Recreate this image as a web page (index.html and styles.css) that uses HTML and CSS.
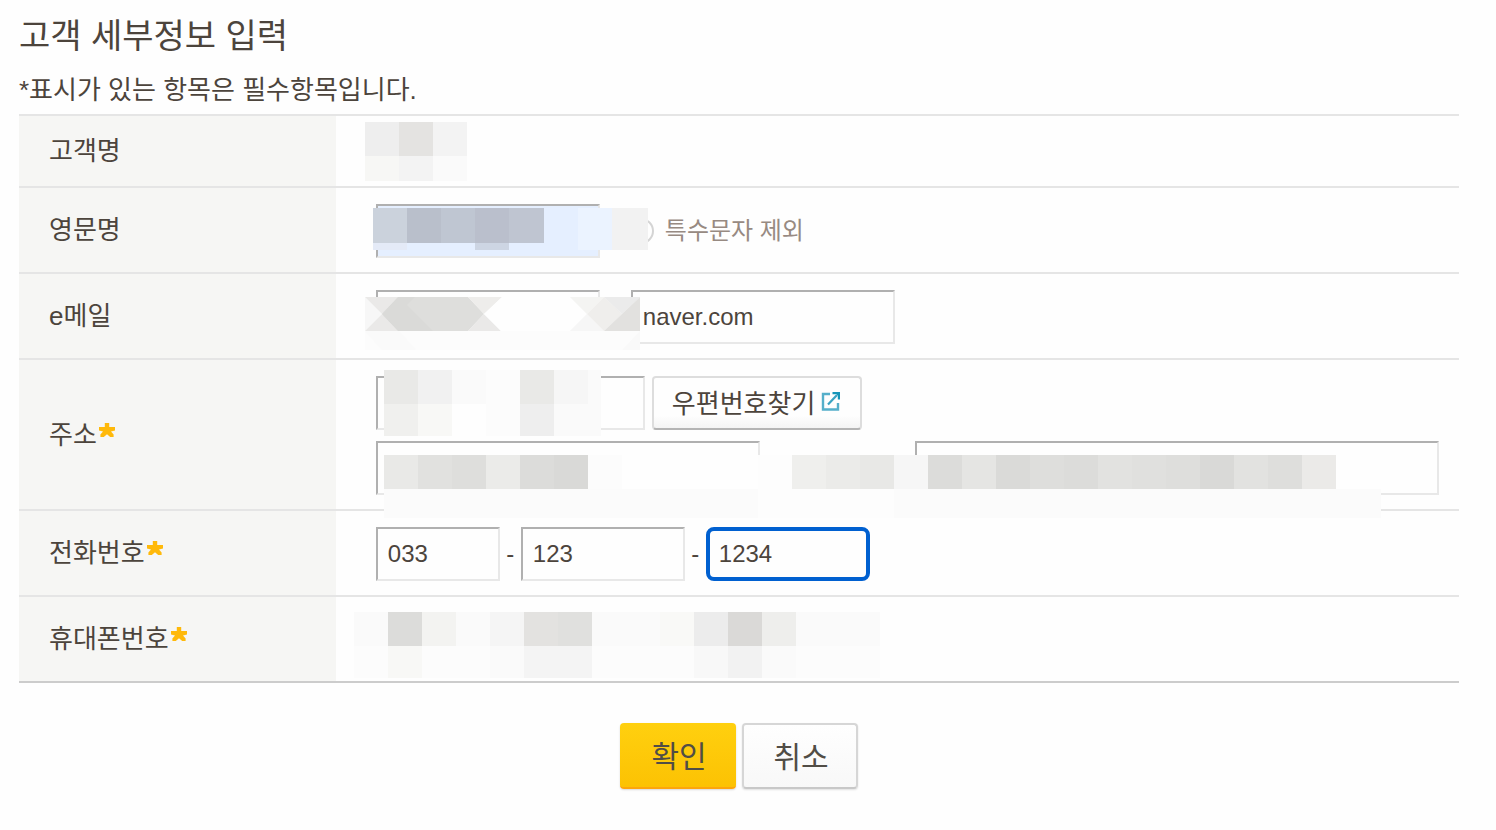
FILE: index.html
```html
<!DOCTYPE html>
<html lang="ko">
<head>
<meta charset="utf-8">
<meta name="viewport" content="width=device-width, initial-scale=1">
<title>고객 세부정보 입력</title>
<link rel="stylesheet" href="styles.css">
</head>
<body>
<svg width="0" height="0" class="defs" aria-hidden="true">
  <symbol id="star" viewBox="0 0 16 14">
    <path d="M5.8 0h4.4v4H16v3.4l-4 1 2.6 3.2V14h-3.4L8 11.2 4.8 14H1.4v-2.4L4 8.4l-4-1V4h5.8z" fill="#ffb90a"/>
  </symbol>
</svg>
<form class="customer">
  <h1 class="title">고객 세부정보 입력</h1>
  <p class="note">*표시가 있는 항목은 필수항목입니다.</p>
  <table class="details">
    <tbody>
      <tr>
        <th scope="row">고객명</th>
        <td>
          <div class="line short"></div>
          <svg class="mask mask-name" width="102" height="59" aria-hidden="true">
            <path d="M0 0h34v34H0z" fill="#eeeeee"/><path d="M34 0h34v34H34z" fill="#e4e3e1"/><path d="M68 0h34v34H68z" fill="#f3f3f3"/>
            <path d="M0 34h34v25H0z" fill="#f7f7f5"/><path d="M34 34h34v25H34z" fill="#f3f3f3"/><path d="M68 34h34v25H68z" fill="#fafafa"/>
          </svg>
        </td>
      </tr>
      <tr>
        <th scope="row"><label for="en">영문명</label></th>
        <td>
          <div class="line">
            <input id="en" class="field w-id filled" type="text">
            <span class="help"></span>
            <span class="hint">특수문자 제외</span>
          </div>
          <svg class="mask mask-en" width="275" height="42" aria-hidden="true">
            <path d="M0 0h275v42H0z" fill="#e5efff"/>
            <path d="M0 0h34v35H0z" fill="#cbd2dc"/><path d="M34 0h34v35H34z" fill="#b9bfcb"/><path d="M68 0h34v35H68z" fill="#bfc6d2"/><path d="M102 0h34v35h-34z" fill="#babfcc"/><path d="M136 0h35v35h-35z" fill="#bfc5d1"/>
            <path d="M0 35h34v7H0z" fill="#e4eaf7"/><path d="M102 35h34v7h-34z" fill="#cdd5e3"/>
            <path d="M205 0h34v42h-34z" fill="#ebf3ff"/><path d="M239 0h36v42h-36z" fill="#f2f2f2"/>
          </svg>
        </td>
      </tr>
      <tr>
        <th scope="row"><label for="mail">e메일</label></th>
        <td>
          <div class="line mail">
            <input id="mail" class="field w-id" type="text">
            <input class="field w-domain" type="text" value="naver.com" aria-label="e메일 도메인">
          </div>
          <svg class="mask mask-mail" width="275" height="53" aria-hidden="true">
            <path d="M0 0h275v53H0z" fill="#fcfcfc"/>
            <path d="M0 0l17 17L0 34z" fill="#f7f7f7"/>
            <path d="M0 0h33L17 17z" fill="#eae9e8"/><path d="M0 34l17-17 16 17z" fill="#eae9e8"/>
            <path d="M33 0h70l16 17-16 17H33L17 17z" fill="#dededc"/>
            <path d="M33 0l-16 17 16 17h35L42 8l8-8z" fill="#dadad8"/>
            <path d="M103 0h34l-18 17z" fill="#eeedeb"/><path d="M103 34l16-17 17 17z" fill="#eae9e8"/>
            <path d="M137 0h68l17 17-17 17h-69l-17-17z" fill="#fefefe"/>
            <path d="M205 0h34l-17 17z" fill="#f4f4f2"/><path d="M205 34l17-17 17 17z" fill="#f6f6f6"/>
            <path d="M239 0l18 17-18 17-17-17z" fill="#efeeec"/>
            <path d="M239 0h36l-18 17z" fill="#ebebeb"/><path d="M275 0v34h-36l18-17z" fill="#e2e1df"/>
            <path d="M0 34h34l17 19H17z" fill="#fafafa"/><path d="M275 34v19h-18z" fill="#f9f9f9"/>
          </svg>
        </td>
      </tr>
      <tr>
        <th scope="row"><label for="zip">주소</label><svg class="star" role="img" aria-label="필수"><use href="#star"/></svg></th>
        <td>
          <div class="address">
            <div class="line zip">
              <input id="zip" class="field w-zip" type="text">
              <button class="find" type="button">우편번호찾기
                <svg class="popup" viewBox="0 0 20 20" aria-hidden="true">
                  <path d="M9 3H2v15.5h15V12" fill="none" stroke="#55afca" stroke-width="2.4"/>
                  <path d="M7 13.5L16 4" fill="none" stroke="#3aa3c2" stroke-width="2.2"/>
                  <path d="M11.5 1H19v7.5h-2.2V4.6L15.5 3.2h-4z" fill="#1595b8"/>
                </svg>
              </button>
            </div>
            <div class="line street">
              <input class="field w-base" type="text" aria-label="기본주소">
              <input class="field w-detail" type="text" aria-label="상세주소">
            </div>
          </div>
          <svg class="mask mask-zip" width="217" height="66" aria-hidden="true">
            <path d="M0 0h217v66H0z" fill="#fafafa"/>
            <path d="M0 0h34v34H0z" fill="#e9e9e7"/><path d="M34 0h34v34H34z" fill="#f1f1f1"/><path d="M102 0h34v34h-34z" fill="#fcfcfc"/><path d="M136 0h34v34h-34z" fill="#e9e9e7"/><path d="M170 0h34v34h-34z" fill="#f6f6f6"/>
            <path d="M0 34h34v32H0z" fill="#f0f0ee"/><path d="M34 34h34v32H34z" fill="#f8f8f6"/><path d="M68 34h34v32H68z" fill="#fefefe"/><path d="M102 34h34v32h-34z" fill="#fcfcfc"/><path d="M136 34h34v32h-34z" fill="#eeeeee"/>
          </svg>
          <svg class="mask mask-street" width="997" height="63" aria-hidden="true">
            <path d="M0 34h997v29H0z" fill="#fbfbfb"/><path d="M374 34h136v29H374z" fill="#fdfdfd"/>
            <path d="M0 0h34v34H0z" fill="#e9e9e7"/><path d="M34 0h34v34H34z" fill="#e1e1df"/><path d="M68 0h34v34H68z" fill="#dededc"/><path d="M102 0h34v34h-34z" fill="#ebebe9"/><path d="M136 0h34v34h-34z" fill="#dcdcda"/><path d="M170 0h34v34h-34z" fill="#d9d9d7"/><path d="M204 0h34v34h-34z" fill="#fcfcfc"/>
            <path d="M238 0h136v34H238z" fill="#fefefe"/><path d="M374 0h34v34h-34z" fill="#fdfdfd"/>
            <path d="M408 0h34v34h-34z" fill="#efefed"/><path d="M442 0h34v34h-34z" fill="#ebebe9"/><path d="M476 0h34v34h-34z" fill="#e8e8e6"/><path d="M510 0h34v34h-34z" fill="#f6f6f6"/><path d="M544 0h34v34h-34z" fill="#dcdcda"/><path d="M578 0h34v34h-34z" fill="#e5e5e3"/><path d="M612 0h34v34h-34z" fill="#dadad8"/><path d="M646 0h34v34h-34z" fill="#dededc"/><path d="M680 0h34v34h-34z" fill="#dcdcda"/><path d="M714 0h34v34h-34z" fill="#e2e2e0"/><path d="M748 0h34v34h-34z" fill="#e0e0de"/><path d="M782 0h34v34h-34z" fill="#dededc"/><path d="M816 0h34v34h-34z" fill="#d9d9d7"/><path d="M850 0h34v34h-34z" fill="#e2e2e0"/><path d="M884 0h34v34h-34z" fill="#dededc"/><path d="M918 0h34v34h-34z" fill="#ebeae8"/>
          </svg>
        </td>
      </tr>
      <tr>
        <th scope="row"><label for="tel">전화번호</label><svg class="star" role="img" aria-label="필수"><use href="#star"/></svg></th>
        <td>
          <div class="line">
            <input id="tel" class="field w-area" type="text" value="033">
            <span class="dash">-</span>
            <input class="field w-tel" type="text" value="123" aria-label="전화번호 가운데 자리">
            <span class="dash">-</span>
            <input class="field w-tel active" type="text" value="1234" aria-label="전화번호 끝자리">
          </div>
        </td>
      </tr>
      <tr>
        <th scope="row">휴대폰번호<svg class="star" role="img" aria-label="필수"><use href="#star"/></svg></th>
        <td>
          <div class="line"></div>
          <svg class="mask mask-mobile" width="526" height="66" aria-hidden="true">
            <path d="M0 0h526v34H0z" fill="#fafafa"/><path d="M0 34h526v32H0z" fill="#fcfcfc"/>
            <path d="M34 0h34v34H34z" fill="#dcdcda"/><path d="M68 0h34v34H68z" fill="#f3f3f1"/><path d="M136 0h34v34h-34z" fill="#f5f5f5"/><path d="M170 0h34v34h-34z" fill="#e3e2e0"/><path d="M204 0h34v34h-34z" fill="#e0e0de"/><path d="M306 0h34v34h-34z" fill="#f9f9f7"/><path d="M340 0h34v34h-34z" fill="#ececec"/><path d="M374 0h34v34h-34z" fill="#dad9d7"/><path d="M408 0h34v34h-34z" fill="#eeeeec"/>
            <path d="M34 34h34v32H34z" fill="#f8f8f6"/><path d="M136 34h34v32h-34z" fill="#fafafa"/><path d="M170 34h68v32h-68z" fill="#f4f4f4"/><path d="M340 34h34v32h-34z" fill="#f8f8f8"/><path d="M374 34h34v32h-34z" fill="#f2f2f2"/><path d="M408 34h34v32h-34z" fill="#fafafa"/>
          </svg>
        </td>
      </tr>
    </tbody>
  </table>
  <div class="actions">
    <button class="btn ok" type="submit">확인</button>
    <button class="btn cancel" type="button">취소</button>
  </div>
</form>
</body>
</html>
```

FILE: styles.css
```css
* { box-sizing: border-box; }

body {
  margin: 0;
  padding: 12px 37px 40px 19px;
  background: #fefefe;
  color: #4c443c;
  font-family: "Liberation Sans", "Noto Sans CJK KR", sans-serif;
  font-size: 26px;
}

.defs { position: absolute; }

.title {
  margin: 0;
  font-size: 34px;
  line-height: 48px;
  font-weight: 400;
}

.note {
  margin: 10px 0 4px;
  line-height: 40px;
}

.details {
  width: 100%;
  border-spacing: 0;
  border-bottom: 2px solid #cccccc;
}

.details th,
.details td {
  border-top: 2px solid #e5e5e5;
}

.details th {
  width: 22%;
  padding: 0 0 0 30px;
  background: #f6f6f4;
  font-weight: 400;
  text-align: left;
  line-height: 40px;
}

.details td {
  position: relative;
  padding: 16px 20px 14px 40px;
}

.line {
  display: flex;
  align-items: center;
  min-height: 54px;
}

.line.short { min-height: 40px; }
.mail { gap: 31px; }
.zip { gap: 7px; }
.street { justify-content: space-between; }

.address {
  display: grid;
  gap: 11px;
}

.field {
  height: 54px;
  padding: 0 10px;
  border: 2px solid;
  border-color: #b0b0b0 #e8e8e8 #e8e8e8 #b0b0b0;
  border-radius: 0;
  background: #fefefe;
  color: #4c443c;
  font-family: inherit;
  font-size: 24px;
  outline: 0;
}

.filled { background: #e5efff; }

.active {
  padding: 0 9px;
  border: 4px solid #0060d0;
  border-radius: 8px;
}

.w-id { width: 224px; }
.w-domain { width: 264px; }
.w-zip { width: 269px; }
.w-base { width: 384px; }
.w-detail { width: 524px; }
.w-area { width: 124px; }
.w-tel { width: 164px; }

.dash {
  width: 21px;
  text-align: center;
  font-size: 24px;
}

.help {
  width: 26px;
  height: 26px;
  margin: 0 11px 0 28px;
  border: 2px solid #d4d4d4;
  border-radius: 50%;
}

.hint {
  color: #978a82;
  font-size: 24px;
  line-height: 40px;
}

.star {
  width: 16px;
  height: 14px;
  margin-left: 2px;
  vertical-align: 7px;
}

.find {
  display: flex;
  align-items: center;
  gap: 6px;
  height: 54px;
  padding: 0 19px 4px 18px;
  border: 2px solid #dddddd;
  border-bottom-color: #b4b4b4;
  border-radius: 4px;
  background: linear-gradient(#fefefe 75%, #f4f4f4);
  color: #4c443c;
  font-family: inherit;
  font-size: 26px;
}

.popup {
  width: 20px;
  height: 20px;
}

.mask {
  position: absolute;
  z-index: 1;
}

.mask-name { left: 29px; top: 6px; }
.mask-en { left: 37px; top: 20px; }
.mask-mail { left: 29px; top: 23px; }
.mask-zip { left: 48px; top: 10px; }
.mask-street { left: 48px; top: 95px; }
.mask-mobile { left: 18px; top: 15px; }

.actions {
  display: flex;
  justify-content: center;
  gap: 6px;
  margin-top: 40px;
}

.btn {
  width: 116px;
  height: 66px;
  padding: 0 0 2px 2px;
  border-radius: 4px;
  color: #514d46;
  font-family: inherit;
  font-size: 30px;
}

.ok {
  border: 0;
  border-bottom: 2px solid #fda50c;
  background: linear-gradient(#ffd00f, #fcc203);
  box-shadow: 0 1px 2px #d8d8d8;
}

.cancel {
  border: 2px solid #d6d6d6;
  border-bottom-color: #c8c8c8;
  background: linear-gradient(#fefefe, #f8f8f8);
  box-shadow: 0 1px 2px #e0e0e0;
}
```
